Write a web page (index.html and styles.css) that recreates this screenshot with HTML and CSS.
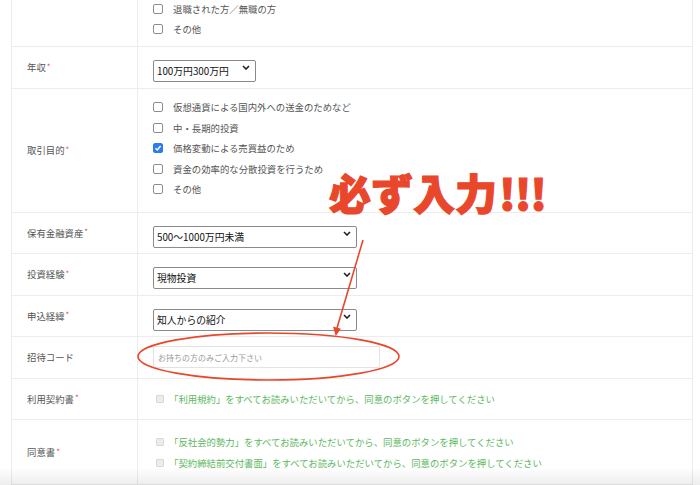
FILE: index.html
```html
<!DOCTYPE html>
<html lang="ja">
<head>
    <meta charset="UTF-8">
    <title>お申込みフォーム</title>
    <link rel="stylesheet" href="styles.css">
</head>
<body>

    <div class="page">
        <div class="form-table">

            <!-- 職業（続き） -->
            <div class="row">
                <div class="label"></div>
                <div class="field checks first">
                    <div class="check"><span class="box"></span>退職された方／無職の方</div>
                    <div class="check"><span class="box"></span>その他</div>
                </div>
            </div>

            <div class="row">
                <div class="label">年収<span class="req">*</span></div>
                <div class="field">
                    <div class="select-wrap small">
                        <select><option>100万円300万円</option></select>
                        <svg class="chevron" width="8" height="5" viewBox="0 0 8 5"><path d="M1 1l3 3 3-3" fill="none" stroke="#222" stroke-width="1.6"/></svg>
                    </div>
                </div>
            </div>

            <div class="row">
                <div class="label">取引目的<span class="req">*</span></div>
                <div class="field checks purpose">
                    <div class="check"><span class="box"></span>仮想通貨による国内外への送金のためなど</div>
                    <div class="check"><span class="box"></span>中・長期的投資</div>
                    <div class="check"><span class="box checked"><svg width="8" height="8" viewBox="0 0 8 8"><path d="M1.5 4.2l1.8 1.8 3.3-4" fill="none" stroke="#fff" stroke-width="1.5"/></svg></span>価格変動による売買益のため</div>
                    <div class="check"><span class="box"></span>資金の効率的な分散投資を行うため</div>
                    <div class="check"><span class="box"></span>その他</div>
                </div>
            </div>

            <div class="row">
                <div class="label">保有金融資産<span class="req">*</span></div>
                <div class="field">
                    <div class="select-wrap">
                        <select><option>500〜1000万円未満</option></select>
                        <svg class="chevron" width="8" height="5" viewBox="0 0 8 5"><path d="M1 1l3 3 3-3" fill="none" stroke="#222" stroke-width="1.6"/></svg>
                    </div>
                </div>
            </div>

            <div class="row">
                <div class="label">投資経験<span class="req">*</span></div>
                <div class="field">
                    <div class="select-wrap">
                        <select><option>現物投資</option></select>
                        <svg class="chevron" width="8" height="5" viewBox="0 0 8 5"><path d="M1 1l3 3 3-3" fill="none" stroke="#222" stroke-width="1.6"/></svg>
                    </div>
                </div>
            </div>

            <div class="row">
                <div class="label">申込経緯<span class="req">*</span></div>
                <div class="field">
                    <div class="select-wrap">
                        <select><option>知人からの紹介</option></select>
                        <svg class="chevron" width="8" height="5" viewBox="0 0 8 5"><path d="M1 1l3 3 3-3" fill="none" stroke="#222" stroke-width="1.6"/></svg>
                    </div>
                </div>
            </div>

            <div class="row">
                <div class="label">招待コード</div>
                <div class="field">
                    <input type="text" class="code-input" placeholder="お持ちの方のみご入力下さい">
                </div>
            </div>

            <div class="row">
                <div class="label">利用契約書<span class="req">*</span></div>
                <div class="field terms">
                    <div class="check agree"><span class="box off"></span>「利用規約」をすべてお読みいただいてから、同意のボタンを押してください</div>
                </div>
            </div>

            <div class="row">
                <div class="label">同意書<span class="req">*</span></div>
                <div class="field terms double">
                    <div class="check agree"><span class="box off"></span>「反社会的勢力」をすべてお読みいただいてから、同意のボタンを押してください</div>
                    <div class="check agree"><span class="box off"></span>「契約締結前交付書面」をすべてお読みいただいてから、同意のボタンを押してください</div>
                </div>
            </div>

        </div>

        <!-- 注釈 -->
        <div class="note">必ず入力<span class="bang">!!!</span></div>
        <svg class="marks" width="700" height="485" viewBox="0 0 700 485">
            <ellipse cx="268.5" cy="356.5" rx="130.5" ry="23.5" fill="none" stroke="#e9472c" stroke-width="1.6"/>
            <line x1="363" y1="240" x2="337" y2="328" stroke="#e9472c" stroke-width="1.6"/>
            <path d="M333 326.5l8 2.3-5.3 7.2z" fill="#e9472c"/>
        </svg>
    </div>

</body>
</html>
```

FILE: styles.css
```css
body {
    margin: 0;
    background: #fff;
    font-family: "Noto Sans CJK JP", "Noto Sans", sans-serif;
    color: #555;
    overflow: hidden;
}

.page {
    position: relative;
    width: 700px;
    height: 485px;
    overflow: hidden;
}

/* 下端のかげ */
.page::after {
    content: '';
    position: absolute;
    left: 0;
    right: 0;
    bottom: 0;
    height: 18px;
    background: linear-gradient(to bottom, rgba(0, 0, 0, 0), rgba(0, 0, 0, 0.07));
}

.form-table {
    margin: -1px 0 0 11px;
    width: 682px;
    box-sizing: border-box;
    border-left: 1px solid #ececec;
    border-right: 1px solid #ececec;
}

.row {
    display: grid;
    grid-template-columns: 126px 1fr;
    border-bottom: 1px solid #ececec;
}

.label {
    border-right: 1px solid #ececec;
    padding-left: 15px;
    display: flex;
    align-items: center;
    font-size: 9.4px;
    color: #555;
}

.req {
    color: #e74c3c;
    font-size: 8px;
    margin: -2px 0 0 1px;
}

.field {
    padding: 9px 0 9.5px 15px;
}

.checks.first {
    padding: 0 0 7px 15px;
}

.checks.purpose {
    padding: 8.5px 0 12px 15px;
}

.check {
    display: flex;
    align-items: center;
    gap: 10px;
    height: 20px;
    font-size: 9.4px;
    color: #555;
}

.purpose .check {
    height: 20.5px;
}

.box {
    width: 10px;
    height: 10px;
    box-sizing: border-box;
    border: 1px solid #8d8d8d;
    border-radius: 2px;
    background: #fff;
    display: flex;
    align-items: center;
    justify-content: center;
    flex: none;
}

.box.checked {
    background: #2b7cf3;
    border-color: #2b7cf3;
}

.box.off {
    width: 8px;
    height: 8px;
    background: #ececec;
    border-color: #d8d8d8;
    border-radius: 1px;
    margin-left: 3px;
}

.select-wrap {
    position: relative;
    width: 204px;
    height: 22px;
}

.select-wrap.small {
    width: 103px;
}

select {
    appearance: none;
    -webkit-appearance: none;
    width: 100%;
    height: 100%;
    box-sizing: border-box;
    border: 1px solid #8a8a8a;
    border-radius: 2px;
    background: #fff;
    padding: 0 3px;
    font-family: "Noto Sans CJK JP", "Noto Sans", sans-serif;
    font-size: 9.8px;
    color: #111;
}

.chevron {
    position: absolute;
    right: 6px;
    top: 9px;
}

.code-input {
    display: block;
    width: 227px;
    height: 22px;
    box-sizing: border-box;
    border: 1px solid #e3e3e3;
    border-radius: 1px;
    padding: 0 4px;
    font-family: "Noto Sans CJK JP", "Noto Sans", sans-serif;
    font-size: 8px;
}

.code-input::placeholder {
    color: #9a9a9a;
}

.terms {
    padding: 10.5px 0 10px 15px;
}

.terms.double {
    padding: 11px 0 11px 15px;
}

.terms.double .check {
    height: 21px;
}

.agree {
    gap: 5px;
    color: #5cb860;
}

.note {
    position: absolute;
    left: 329px;
    top: 171px;
    font-size: 42px;
    line-height: 1;
    font-weight: 900;
    color: #e9472c;
    -webkit-text-stroke: 1.2px #e9472c;
    white-space: nowrap;
}

.bang {
    letter-spacing: -1px;
    margin-left: 2px;
}

.marks {
    position: absolute;
    left: 0;
    top: 0;
    pointer-events: none;
}
```
